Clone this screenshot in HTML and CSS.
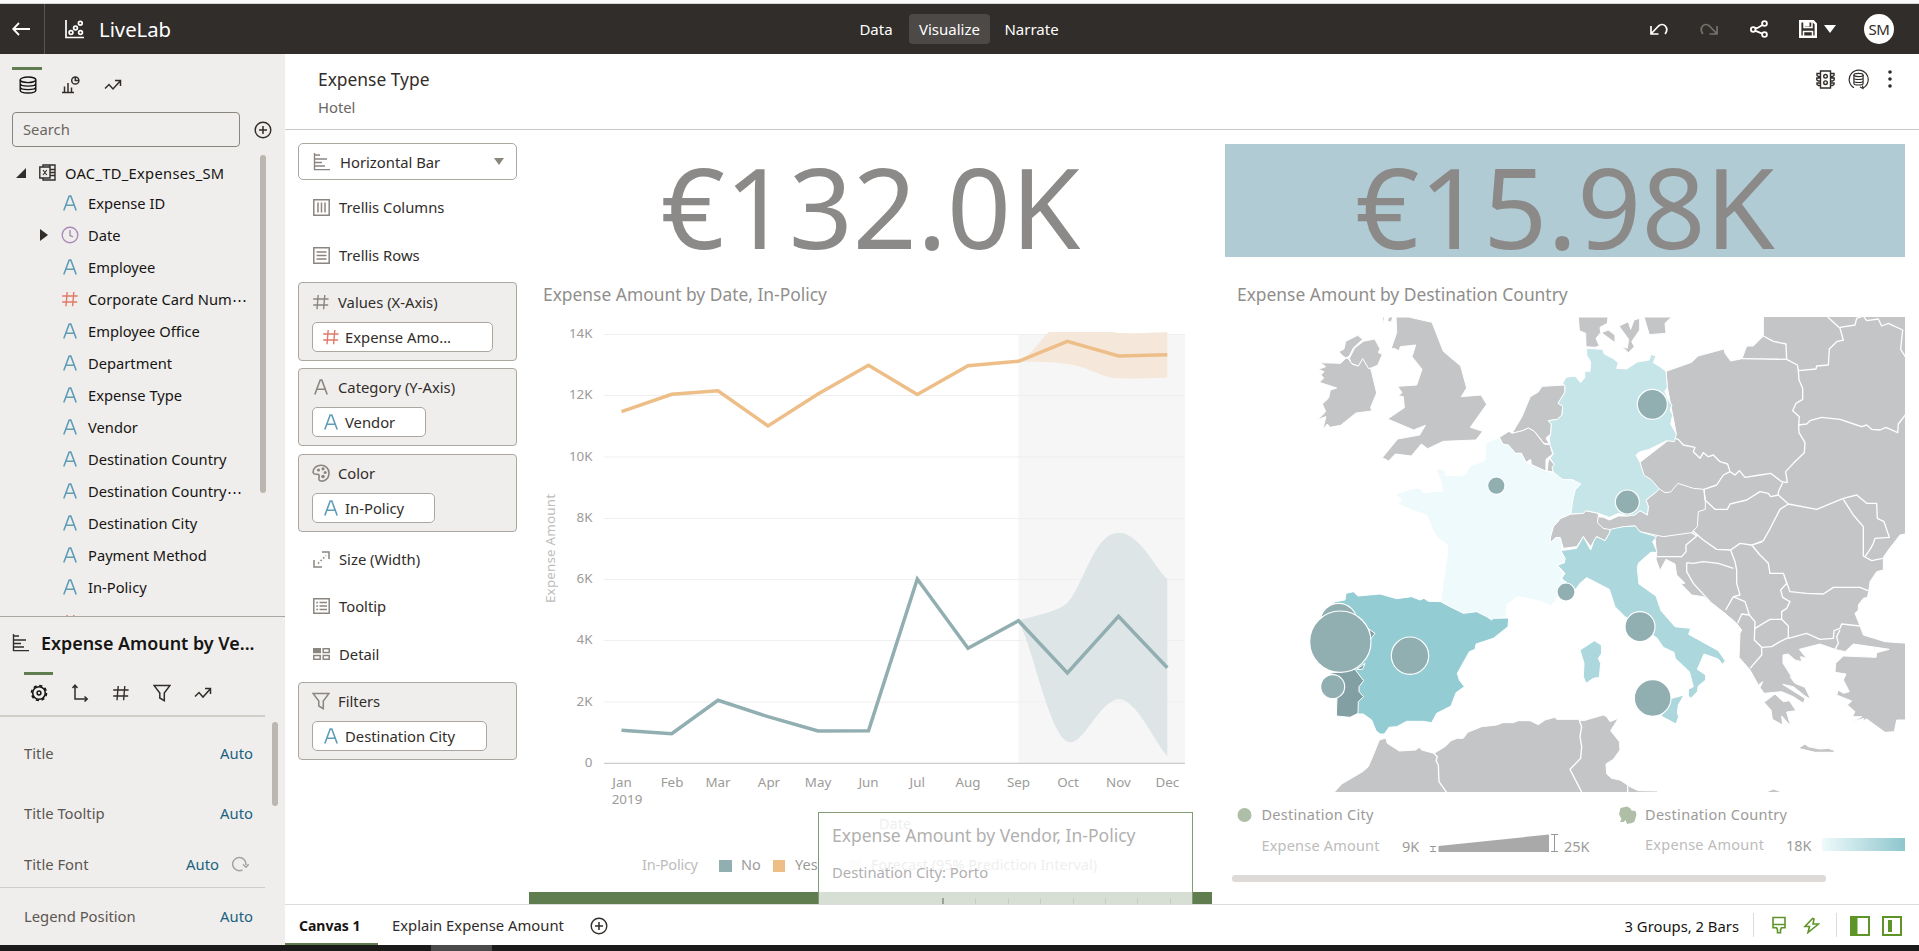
FILE: index.html
```html
<!DOCTYPE html>
<html lang="en">
<head>
<meta charset="utf-8">
<title>LiveLab</title>
<link rel="stylesheet" href="styles.css">
</head>
<body>
<svg class="defs" width="0" height="0">
  <defs>
    <symbol id="i-A" viewBox="0 0 18 18"><path d="M2.8 16.5L8.2 2h1.6l5.4 14.500M4.8 11.2h8.4" fill="none" stroke="currentColor" stroke-width="1.6"/></symbol>
    <symbol id="i-hash" viewBox="0 0 18 18"><path d="M6.2 2L5 16.2M12.8 2l-1.2 14.2M1.2 6h15.4M1.2 12h15" fill="none" stroke="currentColor" stroke-width="1.4"/></symbol>
    <symbol id="i-bars" viewBox="0 0 18 18"><path d="M1.5 0v17M1 2h6M1 6h13M1 9.5h8M1 13h11M1 16.6h16" fill="none" stroke="currentColor" stroke-width="1.4"/></symbol>
    <symbol id="i-filter" viewBox="0 0 18 18"><path d="M1.2 1.6h15.6L11.3 9v7.6L6.8 14V9z" fill="none" stroke="currentColor" stroke-width="1.5"/></symbol>
    <symbol id="i-trend" viewBox="0 0 18 18"><path d="M1 12.5l4-4 4 4.5L16.2 5M11 4.6h5.5V10" fill="none" stroke="currentColor" stroke-width="1.5"/></symbol>
    <symbol id="i-plus" viewBox="0 0 18 18"><path d="M9 5v8M5 9h8" stroke="currentColor" stroke-width="1.5"/><circle cx="9" cy="9" r="7.8" fill="none" stroke="currentColor" stroke-width="1.4"/></symbol>
    <symbol id="i-clock" viewBox="0 0 18 18"><circle cx="9" cy="9" r="7.8" fill="none" stroke="currentColor" stroke-width="1.4"/><path d="M9 4v5.5l3 1.4" fill="none" stroke="currentColor" stroke-width="1.4"/></symbol>
  </defs>
</svg>

<div class="strip-top"></div>
<header class="topbar">
  <div class="back"><svg width="18" height="14" viewBox="0 0 18 14"><path d="M18 7H1.5M7 1L1.2 7 7 13" fill="none" stroke="#fff" stroke-width="1.8"/></svg></div>
  <svg class="logo" width="19" height="19" viewBox="0 0 19 19" fill="none" stroke="#fff" stroke-width="1.7"><path d="M1 0v17.5h18"/><circle cx="6" cy="12.5" r="1.9"/><circle cx="10.5" cy="8" r="1.9"/><circle cx="15.3" cy="3.3" r="1.9"/><circle cx="15.5" cy="12.5" r="1.9"/></svg>
  <h1 class="project">LiveLab</h1>
  <nav class="modes"><a>Data</a><a class="on">Visualize</a><a>Narrate</a></nav>
  <div class="actions">
    <svg class="undo" width="18" height="12" viewBox="0 0 18 12" fill="none" stroke="#fff" stroke-width="1.7"><path d="M1 3v8h7.5M1.4 10.5L8.500 3c5-4.500 11 2 6.600 8"/></svg>
    <svg class="redo" width="18" height="12" viewBox="0 0 18 12" fill="none" stroke="#75716d" stroke-width="1.7"><path d="M17 3v8H9.500M16.600 10.500L9.500 3C4.500-1.500-1.500 5 2.900 11"/></svg>
    <svg class="share" width="18" height="18" viewBox="0 0 18 18" fill="none" stroke="#fff" stroke-width="1.8"><circle cx="3.200" cy="9.500" r="2.300"/><circle cx="14.500" cy="3.500" r="2.400"/><circle cx="14.500" cy="14.500" r="2.400"/><path d="M5 8.500l2.500-.5 5-3M5 10.600l7.200 3"/></svg>
    <svg class="save" width="18" height="18" viewBox="0 0 18 18" fill="none" stroke="#fff"><path d="M1.200 1.200h13L16.800 4v12.800H1.200z" stroke-width="2.400"/><path d="M5 1v6.500h8V1M4.500 17v-5.500h9V17" stroke-width="1.500"/><path d="M5 1h5.500v5.500H5z" fill="#fff" stroke="none"/></svg>
    <svg class="save-arrow" width="12" height="8" viewBox="0 0 12 8"><path d="M0 0h12L6 8z" fill="#fff"/></svg>
    <span class="avatar">SM</span>
  </div>
</header>

<div class="body">
  <aside class="side">
    <section class="data-panel">
      <div class="side-tabs">
        <span class="tab on"><svg width="18" height="18" viewBox="0 0 18 18" fill="none" stroke="#161513" stroke-width="1.400"><ellipse cx="9" cy="3.800" rx="7.800" ry="2.800"/><path d="M1.200 3.800v10.500c0 3.600 15.600 3.600 15.600 0V3.800M1.200 7.500c0 3.500 15.600 3.500 15.600 0M1.200 11c0 3.500 15.600 3.500 15.600 0"/></svg></span>
        <span class="tab"><svg width="18" height="18" viewBox="0 0 18 18" fill="none" stroke="#312d2a" stroke-width="1.500"><path d="M0 16.500h12M2.500 16V10.500M6 16V7M9.500 16v-4.500"/><circle cx="13.300" cy="4.500" r="3.600"/><path d="M13.300 1v3.500h3.400"/></svg></span>
        <span class="tab"><svg width="18" height="18"><use href="#i-trend"/></svg></span>
      </div>
      <div class="search-row"><div class="search">Search</div><svg width="18" height="18"><use href="#i-plus"/></svg></div>
      <div class="tree-wrap">
        <ul class="tree">
          <li class="root"><svg width="10" height="10" viewBox="0 0 10 10"><path d="M10 0v10H0z" fill="#312d2a"/></svg><svg class="sheet" width="17" height="17" viewBox="0 0 17 17" fill="none" stroke="#312d2a" stroke-width="1.400"><path d="M4 3V1h12v15H4v-2M.8 3H11v11H.8zM11 5.500h5M11 8.500h5M11 11.500h5M11 1v2"/><path d="M4 6l3.800 5M7.800 6L4 11" stroke-width="1.100"/></svg>OAC_TD_Expenses_SM</li>
          <li><svg class="txt" width="18" height="18"><use href="#i-A"/></svg>Expense ID</li>
          <li class="branch"><svg class="caret" width="8" height="12" viewBox="0 0 8 12"><path d="M0 0l8 6-8 6z" fill="#312d2a"/></svg><svg class="date" width="18" height="18"><use href="#i-clock"/></svg>Date</li>
          <li><svg class="txt" width="18" height="18"><use href="#i-A"/></svg>Employee</li>
          <li><svg class="num" width="18" height="18"><use href="#i-hash"/></svg>Corporate Card Num<span class="dots">⋯</span></li>
          <li><svg class="txt" width="18" height="18"><use href="#i-A"/></svg>Employee Office</li>
          <li><svg class="txt" width="18" height="18"><use href="#i-A"/></svg>Department</li>
          <li><svg class="txt" width="18" height="18"><use href="#i-A"/></svg>Expense Type</li>
          <li><svg class="txt" width="18" height="18"><use href="#i-A"/></svg>Vendor</li>
          <li><svg class="txt" width="18" height="18"><use href="#i-A"/></svg>Destination Country</li>
          <li><svg class="txt" width="18" height="18"><use href="#i-A"/></svg>Destination Country<span class="dots">⋯</span></li>
          <li><svg class="txt" width="18" height="18"><use href="#i-A"/></svg>Destination City</li>
          <li><svg class="txt" width="18" height="18"><use href="#i-A"/></svg>Payment Method</li>
          <li><svg class="txt" width="18" height="18"><use href="#i-A"/></svg>In-Policy</li>
          <li class="cut"><svg class="num" width="18" height="18"><use href="#i-hash"/></svg></li>
        </ul>
        <div class="tree-thumb"></div>
      </div>
    </section>
    <section class="props">
      <div class="props-title"><svg width="18" height="18"><use href="#i-bars"/></svg><b>Expense Amount by Ve...</b></div>
      <div class="props-tabs">
        <span class="tab on"><svg width="18" height="18" viewBox="0 0 18 18" fill="none" stroke="#161513"><circle cx="9" cy="9" r="6.300" stroke-width="1.600"/><circle cx="9" cy="9" r="7.500" stroke-width="1.600" stroke-dasharray="3.200 2.690"/><circle cx="9" cy="9" r="1.900" stroke-width="1.500"/></svg></span>
        <span class="tab"><svg width="18" height="18" viewBox="0 0 18 18" fill="none" stroke="#312d2a" stroke-width="1.500"><path d="M4 1.500V15h12M1.500 4L4 1.200 6.500 4M13.500 12.500L16.200 15l-2.700 2.500"/></svg></span>
        <span class="tab"><svg width="18" height="18"><use href="#i-hash"/></svg></span>
        <span class="tab"><svg width="18" height="18"><use href="#i-filter"/></svg></span>
        <span class="tab"><svg width="18" height="18"><use href="#i-trend"/></svg></span>
      </div>
      <div class="props-body">
        <div class="props-list">
          <div class="prop p1"><span>Title</span><a>Auto</a></div>
          <div class="prop p2"><span>Title Tooltip</span><a>Auto</a></div>
          <div class="prop p3"><span>Title Font</span><a>Auto</a><svg width="17" height="16" viewBox="0 0 17 16" fill="none" stroke="#a5a19d" stroke-width="1.500"><path d="M10.500 13.800A6.600 6.600 0 1 1 13.800 9M11 8.500l3 2.700 2.600-3"/></svg></div>
          <div class="prop p4"><span>Legend Position</span><a>Auto</a></div>
        </div>
        <div class="props-thumb"></div>
      </div>
    </section>
  </aside>

  <main class="main">
    <div class="filterbar">
      <div class="filter"><div class="f-name">Expense Type</div><div class="f-val">Hotel</div></div>
      <div class="f-icons">
        <svg width="19" height="19" viewBox="0 0 19 19" fill="none" stroke="#312d2a" stroke-width="1.400"><path d="M4.500 1h10v17h-10zM4.500 3.500H1v2l1.500 1h2M4.500 8H.8v2l1.500 1h2M4.500 13H1v1.500l1.500 1h2M14.500 3.500H18v2l-1.500 1h-2M14.500 8h3.700v2l-1.500 1h-2M14.500 13H18v1.500l-1.500 1h-2"/><circle cx="9.500" cy="6.300" r="1.800"/><circle cx="9.500" cy="12.700" r="1.800"/></svg>
        <svg width="21" height="21" viewBox="0 0 21 21" fill="none" stroke="#312d2a" stroke-width="1.200"><path d="M6 18.800A9.500 9.500 0 1 1 15 19M12 18l3 1.500-.5-3"/><ellipse cx="10.500" cy="6" rx="4.600" ry="1.600"/><path d="M5.900 6v8.500c0 2 9.200 2 9.200 0V6M5.900 9c0 2 9.200 2 9.200 0M5.900 12c0 2 9.200 2 9.200 0"/></svg>
        <svg width="4" height="18" viewBox="0 0 4 18" fill="#312d2a"><circle cx="2" cy="2" r="1.800"/><circle cx="2" cy="9" r="1.800"/><circle cx="2" cy="16" r="1.800"/></svg>
      </div>
    </div>

    <div class="work">
      <div class="grammar">
        <div class="viz-select"><svg width="18" height="18"><use href="#i-bars"/></svg><span>Horizontal Bar</span><svg width="10" height="7" viewBox="0 0 10 7"><path d="M0 0h10L5 7z" fill="#8b8580"/></svg></div>
        <div class="edge e1"><svg width="17" height="17" viewBox="0 0 17 17" fill="none" stroke="#8b8580" stroke-width="1.500"><path d="M.8.8h15.400v15.400H.8zM5 3.500v10M8.500 3.500v10M12 3.500v10"/></svg>Trellis Columns</div>
        <div class="edge e2"><svg width="17" height="17" viewBox="0 0 17 17" fill="none" stroke="#8b8580" stroke-width="1.500"><path d="M.8.8h15.400v15.400H.8zM3.500 5h10M3.500 8.500h10M3.500 12h10"/></svg>Trellis Rows</div>
        <div class="drop d1"><div class="drop-h"><svg width="18" height="18"><use href="#i-hash"/></svg>Values (X-Axis)</div><div class="pill w1"><svg class="num" width="18" height="18"><use href="#i-hash"/></svg>Expense Amo...</div></div>
        <div class="drop d2"><div class="drop-h"><svg width="18" height="18"><use href="#i-A"/></svg>Category (Y-Axis)</div><div class="pill w2"><svg class="txt" width="18" height="18"><use href="#i-A"/></svg>Vendor</div></div>
        <div class="drop d3"><div class="drop-h"><svg width="18" height="18" viewBox="0 0 18 18"><path d="M1 8.500C1.500-1.500 17-1 17 9c0 8-9 10-10 6.500-.5-2.500 1-4-.5-5-2-1-4 1-5.500-2z" fill="none" stroke="#8b8580" stroke-width="1.600"/><g fill="#8b8580"><circle cx="6.500" cy="6" r="1.600"/><circle cx="11" cy="4.800" r="1.600"/><circle cx="13.200" cy="8.500" r="1.600"/><circle cx="11" cy="12.500" r="1.800"/></g></svg>Color</div><div class="pill w3"><svg class="txt" width="18" height="18"><use href="#i-A"/></svg>In-Policy</div></div>
        <div class="edge e3"><svg width="17" height="17" viewBox="0 0 17 17" fill="none" stroke="#8b8580" stroke-width="1.500"><path d="M9 1h7v7M1 9v7h8"/><path d="M5 12.500L13 4.500" stroke-dasharray="1.600 2"/></svg>Size (Width)</div>
        <div class="edge e4"><svg width="17" height="16" viewBox="0 0 17 16" fill="none" stroke="#8b8580" stroke-width="1.500"><path d="M.8.8h15.400v14.400H.8zM3.300 4.500H5M6.500 4.500H14M3.300 8H5M6.500 8H14M3.300 11.500H5M6.500 11.500H14"/></svg>Tooltip</div>
        <div class="edge e5"><svg width="17" height="12" viewBox="0 0 17 12" fill="none" stroke="#8b8580" stroke-width="1.500"><path d="M0 0h8v5.200H0z" fill="#8b8580" stroke="none"/><path d="M10.200.8h6v3.600h-6zM.8 7.600h6.400v3.600H.8zM10.200 7.600h6v3.600h-6z"/></svg>Detail</div>
        <div class="drop d4"><div class="drop-h"><svg width="18" height="18"><use href="#i-filter"/></svg>Filters</div><div class="pill w4"><svg class="txt" width="18" height="18"><use href="#i-A"/></svg>Destination City</div></div>
      </div>

      <div class="viz chart-col">
        <div class="kpi">€132.0K</div>
        <div class="viz-title t1">Expense Amount by Date, In-Policy</div>
        <svg class="chart" width="683" height="580" viewBox="529 312 683 580">
          <rect x="1018.500" y="334" width="166.500" height="429" fill="#f6f6f6"/>
          <path class="grid" d="M604 334.500h581M604 395.500h581M604 457h581M604 518.500h581M604 579.500h581M604 640.500h581M604 702h581"/>
          <path d="M1018.500 620.700C1035 615 1055 613 1067.400 603C1084 585 1094 533 1118.500 532.700C1140 533 1155 568 1167.300 579V756C1152 738 1136 699 1118.500 699C1098 702 1084 745 1069 742C1050 738 1034 650 1018.500 620.700z" fill="#dde5e6"/>
          <path d="M1018.500 361.300C1032 355 1040 340 1049 332H1112C1120 334 1150 333 1167.300 332V377.700C1150 378 1130 379 1112 378C1095 374 1085 366 1067.400 364C1050 361 1035 363 1018.500 361.300z" fill="#f5e8da"/>
          <path d="M604 763.300h581" stroke="#ccc" stroke-width="1.200"/>
          <polyline class="line yes" points="621.500,411.700 671.700,394.300 718,390.700 768,426 818,394 868.500,365.300 917.300,394.500 968,365.700 1018.500,361.300 1067.400,341.300 1118.500,356 1167.300,354.700"/>
          <polyline class="line no" points="621.500,730.300 671.700,733.700 718,700.300 768,716.700 818,731 868.500,730.700 917.300,579 968,648.300 1018.500,620.700 1067.400,673 1118.500,616.300 1167.300,667.700"/>
          <g class="tick end"><text x="592.500" y="338">14K</text><text x="592.500" y="399">12K</text><text x="592.500" y="461">10K</text><text x="592.500" y="522">8K</text><text x="592.500" y="583">6K</text><text x="592.500" y="644">4K</text><text x="592.500" y="706">2K</text><text x="592.500" y="767">0</text></g>
          <g class="tick mid"><text x="622" y="787">Jan</text><text x="627" y="804">2019</text><text x="672" y="787">Feb</text><text x="718" y="787">Mar</text><text x="769" y="787">Apr</text><text x="818" y="787">May</text><text x="868.500" y="787">Jun</text><text x="917.300" y="787">Jul</text><text x="968" y="787">Aug</text><text x="1018.500" y="787">Sep</text><text x="1068" y="787">Oct</text><text x="1118.500" y="787">Nov</text><text x="1167.300" y="787">Dec</text></g>
          <text class="axis-title" transform="translate(555 603) rotate(-90)" textLength="109">Expense Amount</text>
          <g class="legend"><text class="pale" x="642" y="870" textLength="56">In-Policy</text><rect x="719" y="860" width="13" height="12" fill="#91aeb1"/><text x="741" y="870">No</text><rect x="773" y="860" width="12" height="12" fill="#eebe88"/><text x="795" y="870">Yes</text><rect x="849" y="860" width="12" height="12" fill="#f3f3f3"/><text class="pale" x="871" y="870" textLength="226">Forecast (95% Prediction Interval)</text><text class="pale" x="879" y="829">Date</text></g>
        </svg>
        <div class="bar-top"></div>
        <div class="ghost">
          <div class="g-title">Expense Amount by Vendor, In-Policy</div>
          <div class="g-sub">Destination City: Porto</div>
          <div class="g-ticks"><i></i><i></i><i></i><i></i><i></i><i></i><i></i><i></i></div>
        </div>
      </div>

      <div class="viz map-col">
        <div class="kpi tinted">€15.98K</div>
        <div class="viz-title t2">Expense Amount by Destination Country</div>
        <svg class="map" width="680" height="475" viewBox="15 51 2040 1425">
          <g class="land">
            <path d="M378 174L362 190 302 188 317 200 295 208 312 215 303 225 311 234 298 247 350 264 331 270 326 294 307 312 317 334 308 345 289 359 318 350 308 388 322 372 330 382 362 376 408 339 455 333 452 322 470 279 453 208 446 204 428 174 415 198 397 193 385 176zM378 174L365 165 357 155 372 147 377 124 413 106 428 118 400 144 388 168z"/>
            <path d="M430 124L464 117 480 146 475 158 487 163 473 196 455 203 446 206 428 176 415 198 394 190 388 175 404 144z"/>
            <path d="M528 51L566 51 636 67 670 154 722 198 740 264 724 290 783 285 800 313 751 382 788 394 768 420 670 424 623 446 604 432 574 468 526 462 506 483 487 473 533 417 599 405 616 376 581 390 503 357 553 323 550 290 535 287 546 278 533 259 590 255 606 208 576 170 587 135 541 140 537 152 522 145 513 147 530 98zM488 51h6l-6 27zM507 51h12l-6 16-11-5z"/>
            <path d="M966 259L1035 255 1035 276 1014 310 1028 318 1026 345 1012 358 985 362 994 372 992 402 978 414 988 432 972 430 943 394 925 384 908 392 876 400 905 352 931 290 955 276z"/>
            <path d="M867 394L876 400 908 392 925 384 943 394 972 432 990 434 998 462 978 478 978 514 934 494 932 478 918 487 904 460 886 460 866 436 848 432 838 412z"/>
            <path d="M986 474L1003 494 998 516 981 513z"/>
            <path d="M340 1480L365 1452 428 1415 445 1400 462 1360 478 1320 497 1314 502 1330 538 1353 587 1350 598 1342 605 1350 642 1360 675 1340 693 1322 712 1315 730 1315 743 1297 785 1280 830 1275 848 1268 880 1268 895 1262 930 1262 955 1274 975 1260 1004 1252 1010 1258 1075 1258 1098 1260 1150 1245 1160 1250 1170 1265 1195 1255 1172 1292 1198 1325 1200 1350 1180 1378 1158 1392 1160 1422 1175 1435 1200 1440 1230 1460 1255 1472 1310 1473 1320 1480z"/>
          </g>
          <path class="border" d="M642 1360L652 1370 648 1382 655 1395 657 1445 682 1480M1098 1260L1078 1262 1085 1280 1080 1310 1085 1340 1082 1375 1050 1408 1087 1480M1223 1456v24"/>
          <g transform="translate(1020 0)">
            <g class="land">
              <path d="M55 51H144L142 70 120 82 122 98 108 115 118 138 105 142 78 140 77 100 58 92zM124 98L145 90 165 105 165 128zM177 78L205 65 212 88 222 60 239 55 239 90 215 125 223 140 205 158 185 138 202 145 206 118zM252 51H335L315 70 318 100 268 104z"/>
              <path d="M318 214L395 187 414 168 492 147 495 160 512 183 546 176 560 138 580 138 610 108 610 40H1045V700L1020 705 985 750 970 772 970 810 950 815 930 845 926 875 922 892 910 895 895 915 895 930 885 940 900 978 910 1005 975 1025 1045 1030V1260H1010L1003 1295 975 1297 920 1257 905 1265 912 1255 877 1265 905 1250 877 1250 885 1235 862 1215 875 1203 830 1185 835 1170 850 1180 868 1175 850 1140 858 1122 825 1117 827 1090 850 1068 948 1072 950 1058 988 1048 880 1032 855 1055 825 1048 780 1032 718 1048 740 1075 722 1070 725 1085 705 1080 685 1062 669 1065 669 1090 700 1138 690 1130 705 1150 735 1162 752 1198 735 1188 700 1160 668 1153 735 1195 730 1210 700 1190 665 1175 613 1180 600 1163 608 1145 595 1155 570 1110 537 1072 540 1000 545 990 530 970 495 940 450 905 430 890 395 885 362 850 375 850 350 825 345 792 318 778 300 812 288 778 290 765 285 715 240 690 258 600 240 487 349 402 322 262z"/>
              <path d="M612 1207L645 1182 670 1205 688 1202 708 1232 680 1236 692 1278 665 1248 668 1275 637 1258 633 1230zM715 1345L735 1332 745 1340 780 1347 805 1345 825 1352 820 1357 765 1357zM610 1480L640 1467 675 1480z"/>
              <path d="M-30 728L-28 708-20 680 2 655 32 642 70 640 78 632 115 640 115 668 130 685 152 685 148 700 135 722 110 710 102 722 92 740 70 710 50 740 10 745 0 712-12 714z"/>
              <path d="M115 650L130 652 148 660 176 648 200 648 225 643 240 632 262 645 265 620 258 600 290 575 297 566 315 578 332 576 354 550 400 565 432 568 436 600 436 628 415 635 412 680 395 698 310 710 240 695 226 678 190 680 165 692 130 685 112 668z"/>
            </g>
            <path class="border" d="M546 176L680 178 678 132 640 124 610 108M680 178L712 195 715 212 768 207 770 198 805 195 808 147 830 125 850 120 840 85 803 51M840 82L885 75 890 55 910 48 920 62 955 57 965 78 985 70 1028 90 1022 148 1036 170M715 212L717 240 728 265 728 298 708 310 698 332 718 350 716 375 717 398 735 428 733 458 700 490 677 515 682 548M716 375L740 372 750 362 785 352 840 358 890 375 905 380 920 375 935 388 960 390 978 382 1013 398 1015 372 1036 345M345 415L355 418 370 435 405 442 400 455 420 475 430 458 445 470 460 465 480 485 503 492 510 515 525 525 538 512 555 532 600 525 632 520 665 545 682 548M432 568L470 555 490 525 510 515M432 570L435 600 465 628 502 628 510 612 560 600 600 575 625 580 632 590 655 585 655 575 668 548M655 585L685 612 770 628 850 595 890 585 920 610 950 610 952 655 972 665 988 712 945 715 940 730 932 745 915 770M850 598L880 645 910 680 910 768 935 782 968 775M685 612L660 628 628 690 610 722 575 735 540 730 512 750 470 748 430 720 398 692M575 735L608 725M395 698L410 708 378 735 378 755 365 770 290 770M380 788L400 790 430 785 475 790 520 805M380 788V815L400 850 450 905M512 750L525 785 530 810 530 850 540 885 520 890 497 930M520 890L555 905 568 945 545 942 533 970M575 735L600 765 625 790 630 820 670 820 680 850 662 870 668 892 690 905 680 925 665 935 665 958M568 945L585 965 583 1020 605 1042 635 1040 660 1025 685 1013 685 978 665 958 630 958 585 985M605 1042L605 1065 570 1105M670 820L690 875 740 880 790 882 820 862 900 862 924 872M685 1015L740 1000 780 1018 820 1015 822 992 840 985 845 972 900 978M840 990L830 1010 835 1030 825 1048"/>
            <path class="ger" d="M80 145L128 148 133 162 160 176 175 188 170 205 200 207 232 186 268 180 272 163 288 168 280 188 300 200 318 214 322 262 314 275 328 305 336 315 330 330 338 345 332 372 349 402 343 425 320 422 300 432 268 448 238 456 228 466 240 487 252 525 275 540 297 566 290 575 258 600 265 620 262 645 240 632 225 645 200 648 176 640 148 652 115 640 78 632 70 640 32 642 38 600 45 570 62 552 35 540 5 538-5 534-20 518-24 500-17 494-30 474-20 462-30 434-32 414-28 402-26 372-35 362-8 358 6 345 8 318-6 310 15 276 15 258 8 250 18 232 45 228 62 248 75 232 74 214 90 214 92 186 80 165z"/>
            <path class="ita" d="M92 750L102 722 110 710 135 722 148 700 152 688 190 680 226 678 240 695 290 710 278 725 292 757 272 757 235 790 232 805 237 852 288 888 303 932 345 980 392 985 386 1003 475 1052 496 1083 487 1093 475 1077 432 1062 412 1108 437 1125 437 1140 415 1158 412 1175 393 1195 385 1188 385 1168 400 1160 388 1115 346 1075 342 1057 310 1042 290 1013 240 980 195 950 165 920 148 868 80 833 60 850 47 868 20 850 5 835 15 820-8 795 13 788 15 775 2 752 50 745 70 710zM60 1050L103 1022 124 1035 125 1060 115 1075 122 1090 118 1132 100 1135 78 1150 70 1130 72 1090zM332 1196L372 1185 355 1215 352 1240 356 1250 348 1272 303 1248z"/>
          </g>
          <path class="fra" d="M838 412L848 432 866 436 886 460 904 460 918 487 978 514 1002 518 1030 540 1055 538 1082 552 1065 570 1058 600 1052 642 1022 655 1000 680 990 715 990 730 1008 712 1022 715 1025 742 1022 752 1035 775 1033 788 1012 795 1030 820 1022 840 1040 846 1020 880 995 917 958 902 892 890 860 915 858 954 820 955 815 960 800 950 770 935 730 940 690 920 662 905 670 850 683 760 683 735 652 712 636 685 620 645 575 630 535 612 545 600 528 582 580 565 600 565 612 580 640 575 670 573 660 535 648 508 672 508 678 528 735 525 750 498 795 482 798 428z"/>
          <path class="esp" d="M345 905L375 900 378 880 400 875 414 888 480 882 530 896 575 890 600 900 612 895 625 904 662 905 690 920 730 940 770 935 800 950 815 960 820 955 866 954 864 980 820 1015 768 1032 765 1048 748 1055 712 1120 718 1140 733 1160 708 1178 693 1218 650 1240 635 1268 610 1264 560 1264 530 1280 507 1282 493 1302 480 1302 468 1292 455 1260 430 1242 412 1242 400 1100 320 1050 305 945z"/>
          <path class="prt" d="M349 1248L351 1190 330 1120 405 1108 420 1128 431 1142 417 1160 417 1175 431 1190 415 1205 414 1240 390 1252zM440 983L465 1000 450 1020zM410 1108L435 1090 428 1108z"/>
          <g class="city"><circle cx="829" cy="557" r="26"/><circle cx="1297" cy="313" r="45"/><circle cx="1222" cy="606" r="36"/><circle cx="1038" cy="876" r="27"/><circle cx="1260" cy="980" r="45"/><circle cx="1298" cy="1194" r="55"/><circle cx="356" cy="965" r="55"/><circle cx="361" cy="1025" r="92"/><circle cx="338" cy="1160" r="36"/><circle cx="570" cy="1067" r="56"/></g>
        </svg>
        <svg class="map-legend" width="680" height="60" viewBox="1225 800 680 60">
          <defs><linearGradient id="ramp"><stop offset="0" stop-color="#effafb"/><stop offset="1" stop-color="#8dc6cd"/></linearGradient></defs>
          <circle cx="1244.500" cy="815" r="7" fill="#afbfa7"/>
          <text x="1261.500" y="820" textLength="112">Destination City</text>
          <text class="pale" x="1261.500" y="851" textLength="118">Expense Amount</text>
          <text x="1402" y="852">9K</text>
          <path d="M1430 846.500h6M1430 851.500h6M1433 846.500v5M1551 834.500h7M1551 851.500h7M1554.500 834.500v17" stroke="#999" fill="none"/>
          <path d="M1438.500 846L1549 834.500V852H1438.500z" fill="#a9a9a9"/>
          <text x="1564" y="852">25K</text>
          <path d="M1620.500 808l6.500-1.500 3 1.500 1.500 2.500 4 .5 1 3.500-2 7-2.500 1.500-5 1-1.500-4-2 2h-3.500l1.500-3-2.500-5z" fill="#afbfa7"/>
          <text x="1645" y="820" textLength="142">Destination Country</text>
          <text class="pale" x="1645" y="850" textLength="119">Expense Amount</text>
          <text x="1786" y="851">18K</text>
          <rect x="1822" y="838" width="83" height="13" fill="url(#ramp)"/>
        </svg>
        <div class="h-thumb"></div>
      </div>
    </div>

    <footer class="foot">
      <div class="canvas-tab on">Canvas 1</div>
      <div class="canvas-tab">Explain Expense Amount</div>
      <svg class="add" width="18" height="18"><use href="#i-plus"/></svg>
      <div class="status">3 Groups, 2 Bars</div>
      <i class="sep"></i>
      <svg class="s1" width="14" height="18" viewBox="0 0 14 18" fill="none" stroke="#5f9528" stroke-width="1.600"><path d="M1 1.500h12v10.300H9.500l-1 2v3h-3v-3l-1-2H1zM1 8.500h12"/></svg>
      <svg class="s2" width="17" height="17" viewBox="0 0 17 17" fill="none" stroke="#5f9528" stroke-width="1.600"><path d="M9.500 1.500L2 9.500h4.500L5 15.500 15.500 7h-5.500l1-5z"/></svg>
      <i class="sep"></i>
      <svg class="s3" width="20" height="20" viewBox="0 0 20 20" fill="none" stroke="#5f9528" stroke-width="2"><path d="M1 1h18v18H1z"/><path d="M0 0h7.500v20H0z" fill="#5f9528" stroke="none"/></svg>
      <svg class="s4" width="20" height="20" viewBox="0 0 20 20" fill="none" stroke="#5f9528" stroke-width="2"><path d="M1 1h18v18H1z"/><path d="M8 4v12" stroke-width="4"/></svg>
    </footer>
  </main>
</div>
<div class="strip-bottom"><i></i></div>
</body>
</html>
```
FILE: styles.css
```css
* { box-sizing: border-box; }
body { margin: 0; width: 1919px; height: 951px; overflow: hidden; display: flex; flex-direction: column; font: 400 14.8px/20px "Noto Sans", sans-serif; color: #161513; background: #fff; }
svg { display: block; flex: none; }
.defs { position: absolute; }
.strip-top { height: 4px; flex: none; background: #fafafa; border-bottom: 1px solid #d5d5d5; }

.topbar { height: 50px; flex: none; display: flex; align-items: center; background: #312d2a; color: #fff; }
.back { width: 45px; height: 50px; display: flex; align-items: center; padding-left: 12px; border-right: 1px solid #5b5652; }
.logo { margin-left: 20px; }
.project { margin: 0 0 0 15px; font-size: 20.3px; font-weight: 400; width: 745px; }
.modes { display: flex; gap: 1px; font-size: 15px; }
.modes a { height: 30px; line-height: 30px; border-radius: 4px; width: 81px; text-align: center; }
.modes a:first-child { width: 64px; }
.modes a.on { background: #4d4946; }
.actions { margin-left: auto; display: flex; align-items: center; padding-right: 25px; }
.redo { margin-left: 32px; }
.share { margin-left: 32px; }
.save { margin-left: 31px; }
.save-arrow { margin-left: 7px; }
.avatar { margin-left: 28px; width: 30px; height: 30px; line-height: 31px; border-radius: 50%; background: #fff; color: #312d2a; text-align: center; font-size: 15px; letter-spacing: -.5px; }

.body { flex: 1; display: flex; min-height: 0; }
.side { width: 285px; flex: none; background: #f0eeec; display: flex; flex-direction: column; }
.data-panel { height: 563px; border-bottom: 1px solid #aca6a1; overflow: hidden; }
.side-tabs { display: flex; padding: 13px 0 0 12px; gap: 12.5px; height: 58px; }
.side-tabs .tab { width: 30px; height: 36px; padding: 6px 0 0 7px; border-top: 3px solid transparent; }
.side-tabs svg, .props-tabs svg { color: #312d2a; }
.search-row { display: flex; align-items: center; gap: 14px; padding-left: 12px; color: #312d2a; }
.search { width: 228px; height: 35px; line-height: 33px; border: 1px solid #8b8580; border-radius: 4px; padding-left: 10px; color: #6b6662; }
.tree-wrap { display: flex; padding-top: 8px; }
.tree { list-style: none; margin: 0; padding: 0; width: 260px; font-size: 14.7px; }
.tree li { height: 32px; display: flex; align-items: center; padding-left: 61px; gap: 9px; white-space: nowrap; }
.tree li.root { height: 33px; padding: 3px 0 1px 16px; gap: 0; letter-spacing: .3px; }
.sheet { margin: 0 9px 0 13px; }
.tree li.root + li { height: 31px; padding-bottom: 1px; }
.tree li.branch { padding-left: 40px; }
.tree li.cut { padding-top: 5px; }
.caret { margin-right: 4px; }
.dots { margin-left: -9px; }
.txt { color: #5f9cb8; }
.num { color: #e07a68; }
.date { color: #a98bb8; }
.tree-thumb { width: 6px; height: 338px; border-radius: 3px; background: #bcb6b1; }

.props-title { display: flex; align-items: center; gap: 11px; padding: 13px 0 17px 12px; height: 55px; font-size: 17.9px; color: #312d2a; white-space: nowrap; }
.props-title b { color: #161513; font-weight: 600; }
.props-tabs { display: flex; gap: 12px; padding-left: 24px; height: 45px; width: 265px; border-bottom: 2px solid #d0ccc8; }
.props-tabs .tab { width: 29px; border-top: 3px solid transparent; padding: 9px 0 0 6px; }
.side-tabs .tab.on, .props-tabs .tab.on { border-top-color: #5f7d4f; height: 36px; }
.props-body { display: flex; }
.props-list { width: 265px; }
.prop { display: flex; align-items: center; padding: 0 12px 0 24px; color: #5b5652; }
.prop a { margin-left: auto; color: #19627f; }
.prop svg { margin: 0 4px 0 13px; }
.p1 { height: 73px; padding-bottom: 2px; }
.p2 { height: 46px; padding-bottom: 1px; }
.p3 { height: 52px; padding-top: 4px; border-bottom: 1px solid #d0ccc8; }
.p4 { height: 55px; }
.props-thumb { width: 6px; height: 84px; margin: 5px 0 0 7px; border-radius: 3px; background: #bcb6b1; }

.main { flex: 1; display: flex; flex-direction: column; min-width: 0; }
.filterbar { height: 76px; display: flex; justify-content: space-between; padding: 16px 27px 0 33px; border-bottom: 1px solid #c9c9c9; }
.f-name { font-size: 17.4px; line-height: 21px; color: #312d2a; margin-top: -1px; }
.f-val { line-height: 20px; margin-top: 7px; color: #6b6662; }
.f-icons { display: flex; gap: 13px; height: 18px; align-items: center; }
.f-icons svg:last-child { margin-left: 6px; }

.work { flex: 1; display: flex; padding: 13px 14px 0 13px; min-height: 0; overflow: hidden; }
.grammar { width: 219px; display: flex; flex-direction: column; color: #312d2a; margin-right: 12px; flex: none; }
.viz-select { height: 37px; border: 1px solid #aca6a1; border-radius: 5px; display: flex; align-items: center; padding: 0 12px 0 14px; gap: 9px; color: #8b8580; }
.viz-select span { flex: 1; color: #312d2a; }
.edge { display: flex; align-items: center; padding: 0 0 2px 15px; gap: 9px; height: 48px; }
.e1 { margin-top: 4px; }
.e2 { margin-bottom: 2px; }
.drop { background: #f0eeec; border: 1px solid #aca6a1; border-radius: 4px; height: 78px; padding: 8px 0 0 13px; }
.drop-h { display: flex; align-items: center; gap: 8px; height: 20px; color: #312d2a; margin-bottom: 10px; }
.drop-h svg, .viz-select svg { color: #8b8580; }
.pill { height: 30px; border: 1px solid #aca6a1; border-radius: 5px; background: #fff; display: flex; align-items: center; gap: 5px; padding-left: 9px; }
.w1 { width: 181px; } .w2 { width: 114px; } .w3 { width: 123px; } .w4 { width: 175px; }
.d1 { height: 79px; padding-top: 9px; }
.d2 { margin-top: 7px; }
.d3 { margin-top: 8px; }
.e3 { margin-top: 4px; }
.e4 { height: 46px; }
.e5 { margin-bottom: 4px; padding-bottom: 0; }

.viz { position: relative; display: flex; flex-direction: column; flex: none; }
.chart-col { width: 683px; margin-right: 13px; }
.map-col { width: 680px; }
.kpi { height: 114px; line-height: 123px; font-size: 112px; text-align: center; color: #8b8a88; margin-top: 1px; flex: none; }
.tinted { background: #b1cbd5; height: 113px; margin-bottom: 1px; }
.viz-title { height: 54px; line-height: 73px; padding-left: 14px; font-size: 17.4px; color: #8f8e8c; white-space: nowrap; }
.map-col .viz-title { height: 59px; padding-left: 12px; }
.chart .grid { stroke: #efefef; }
.line { fill: none; stroke-width: 3.500; }
.yes { stroke: #eebe88; }
.no { stroke: #91aeb1; }
.tick { font-size: 13.4px; fill: #9c9b99; }
.end { text-anchor: end; }
.mid { text-anchor: middle; }
.axis-title { font-size: 13.4px; fill: #bdbcbb; }
.legend, .map-legend { font-size: 14.5px; fill: #9c9b99; }
.pale { fill: #bdbcbb; }
.bar-top { height: 12px; background: #5f7d4f; flex: none; }
.ghost { position: absolute; left: 289px; top: 669px; width: 375px; height: 92px; border: 1px solid #819b74; border-bottom: 0; background: rgba(255,255,255,.75); padding: 11px 0 0 13px; color: #b1b0af; display: flex; flex-direction: column; }
.g-title { font-size: 17.500px; line-height: 22px; white-space: nowrap; }
.g-sub { margin-top: 16px; white-space: nowrap; }
.g-ticks { display: flex; gap: 31.400px; margin: 16px 0 0 110px; }
.g-ticks i { width: 1px; height: 6px; background: #c5cfbf; }
.g-ticks i:first-child { width: 2px; background: #99a394; }

.land path { fill: #c4c5c7; }
.border { fill: none; stroke: #fff; stroke-width: 4; stroke-linejoin: round; }
.land path, .ger, .ita, .fra, .esp, .prt { stroke: #fff; stroke-width: 3; stroke-linejoin: round; }
.ger { fill: #c5e5e8; }
.ita { fill: #acd7dc; }
.fra { fill: #eefafb; }
.esp { fill: #93ccd3; }
.prt { fill: #82a0a4; }
.city { fill: #91aeb1; stroke: #fff; stroke-width: 3.500; }
.map-legend { margin-top: 8px; }
.h-thumb { width: 594px; height: 7px; flex: none; margin: 15px 0 0 7px; border-radius: 3px; background: #dedad8; }

.foot { height: 41px; flex: none; border-top: 1px solid #dcdcdc; display: flex; align-items: center; padding-right: 17px; background: #fff; color: #161513; }
.canvas-tab { height: 40px; line-height: 41px; padding-left: 14px; white-space: nowrap; color: #312d2a; }
.canvas-tab.on { width: 93px; font-size: 14px; font-weight: 700; border-bottom: 2px solid #5f7d4f; color: #161513; }
.add { margin: 1px 0 0 26px; color: #312d2a; }
.status { margin-left: auto; margin-top: 1px; }
.sep { width: 1px; height: 24px; background: #dcdcdc; }
.status + .sep { margin: 0 18px 0 14px; }
.s2 { margin: 0 16px 0 17px; }
.s3 { margin: 2px 12px 0 13px; }
.s4 { margin-top: 2px; }

.strip-bottom { height: 6px; flex: none; background: #1b1b1b; padding-left: 431px; }
.strip-bottom i { display: block; width: 61px; height: 6px; background: #4a4a4a; }
```
